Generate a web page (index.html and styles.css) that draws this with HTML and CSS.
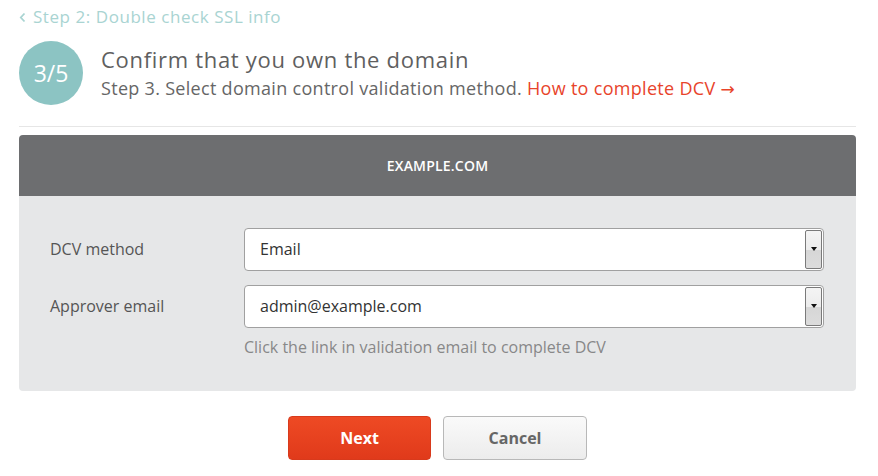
FILE: index.html
```html
<!DOCTYPE html>
<html>
<head>
<meta charset="utf-8">
<link rel="stylesheet" href="styles.css">
</head>
<body>
<div class="page">
  <a class="back" href="#"><svg class="chev" width="7" height="11" viewBox="0 0 7 11"><path d="M5.5 1.5 L1.8 5.5 L5.5 9.5" fill="none" stroke="#a9d4d2" stroke-width="1.8"/></svg>Step 2: Double check SSL info</a>
  <div class="head">
    <div class="badge">3/5</div>
    <div class="titles">
      <h1 class="title">Confirm that you own the domain</h1>
      <p class="sub">Step 3. Select domain control validation method. <a class="link" href="#">How to complete DCV <span class="arrow">→</span></a></p>
    </div>
  </div>
  <hr class="divider">
  <div class="panel">
    <div class="panel-head">EXAMPLE.COM</div>
    <div class="panel-body">
      <div class="row">
        <label class="label">DCV method</label>
        <div class="select"><span class="value">Email</span><span class="drop"><span class="tri"></span></span></div>
      </div>
      <div class="row">
        <label class="label">Approver email</label>
        <div class="field">
          <div class="select"><span class="value">admin@example.com</span><span class="drop"><span class="tri"></span></span></div>
          <p class="help">Click the link in validation email to complete DCV</p>
        </div>
      </div>
    </div>
  </div>
  <div class="actions">
    <button class="btn btn-next">Next</button>
    <button class="btn btn-cancel">Cancel</button>
  </div>
</div>
</body>
</html>
```
FILE: styles.css
```css
* { box-sizing: border-box; }
body {
  margin: 0;
  font-family: "Open Sans", "Liberation Sans", sans-serif;
  color: #666;
  background: #fff;
}
.page {
  width: 837px;
  margin-left: 19px;
  padding-top: 6px;
}
.back {
  display: flex;
  align-items: center;
  gap: 7px;
  color: #a9d4d2;
  text-decoration: none;
  font-size: 17px;
  letter-spacing: 0.55px;
  line-height: 22px;
}
.chev { margin-top: 1px; }
.head {
  display: flex;
  align-items: center;
  margin-top: 13px;
}
.badge {
  width: 64px;
  height: 64px;
  border-radius: 50%;
  background: #8cc4c3;
  color: #fff;
  font-size: 23px;
  display: flex;
  align-items: center;
  justify-content: center;
  flex-shrink: 0;
}
.titles { margin-left: 18px; }
.title {
  margin: 0;
  font-size: 22px;
  letter-spacing: 0.7px;
  font-weight: 400;
  color: #5f5f5f;
  line-height: 28px;
}
.sub {
  margin: 4px 0 0;
  font-size: 18px;
  letter-spacing: 0.3px;
  line-height: 23px;
  color: #666;
}
.link { color: #e8442b; text-decoration: none; }
.arrow { font-family: "DejaVu Sans", sans-serif; font-size: 17px; letter-spacing: 0; }
.divider {
  margin: 21px 0 0;
  border: 0;
  border-top: 1px solid #e6e6e6;
}
.panel {
  margin-top: 8px;
  border-radius: 4px;
  overflow: hidden;
}
.panel-head {
  background: #6d6e70;
  color: #fff;
  height: 61px;
  display: flex;
  align-items: center;
  justify-content: center;
  font-size: 14px;
  font-weight: 600;
  letter-spacing: 0.2px;
}
.panel-body {
  background: #e6e7e8;
  padding: 32px 32px 34px 31px;
  display: flex;
  flex-direction: column;
  gap: 14px;
}
.row {
  display: flex;
  align-items: flex-start;
}
.label {
  width: 194px;
  font-size: 16px;
  line-height: 43px;
  color: #555;
}
.field { flex: 1; }
.select {
  flex: 1;
  height: 43px;
  background: #fff;
  border: 1px solid #a0a0a0;
  border-radius: 4px;
  display: flex;
  align-items: stretch;
}
.value {
  flex: 1;
  padding-left: 15px;
  line-height: 41px;
  font-size: 16px;
  color: #333;
}
.drop {
  width: 17px;
  margin: 1px 1px 1px 0;
  border: 1px solid #7a7a7a;
  border-radius: 2px;
  background: linear-gradient(#f4f4f4 0%, #ececec 50%, #d6d6d6 51%, #dcdcdc 100%);
  display: flex;
  align-items: center;
  justify-content: center;
}
.tri {
  width: 0;
  height: 0;
  border-left: 3.5px solid transparent;
  border-right: 3.5px solid transparent;
  border-top: 4px solid #111;
  margin-top: -2px;
}
.help {
  margin: 9px 0 0;
  font-size: 16px;
  line-height: 20px;
  color: #888;
}
.actions {
  display: flex;
  justify-content: center;
  gap: 12px;
  margin-top: 25px;
}
.btn {
  width: 143px;
  height: 44px;
  border-radius: 4px;
  font-family: inherit;
  font-size: 16px;
  font-weight: 700;
  cursor: pointer;
}
.btn-cancel { width: 144px; }
.btn-next {
  background: linear-gradient(#ee4a24, #e03a1b);
  border: 1px solid #d83a1c;
  color: #fff;
}
.btn-cancel {
  background: linear-gradient(#fafafa, #ececec);
  border: 1px solid #b8b8b8;
  color: #666;
}
```
